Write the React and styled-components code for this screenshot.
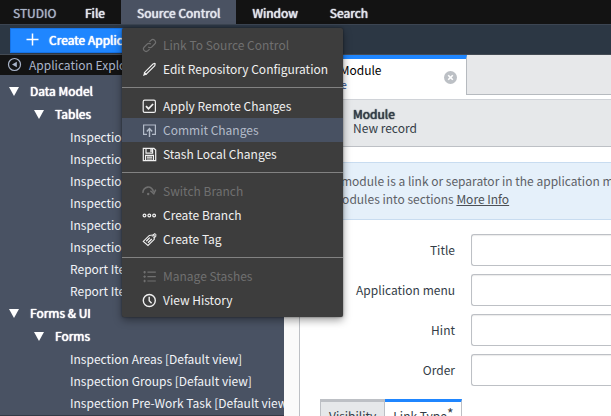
import React from "react";
import styled, { createGlobalStyle, css } from "styled-components";

const Global = createGlobalStyle`
  *, *::before, *::after { box-sizing: border-box; }
  body {
    margin: 0;
    overflow: hidden;
    background: #ffffff;
    color: #343d47;
    font-family: "Noto Sans CJK SC", "Noto Sans", sans-serif;
    font-size: 12px;
    line-height: 18px;
  }
  button, input { font: inherit; color: inherit; }
`;

const strong = css`
  font-weight: 400;
  text-shadow: 0 0 1px currentColor, 0 0 1px currentColor;
`;

const Page = styled.div`
  display: flex;
  flex-direction: column;
  height: 100vh;
  overflow: hidden;
`;

const MenuBar = styled.nav`
  display: flex;
  flex: none;
  height: 24px;
  background: #131313;
`;

const Brand = styled.span`
  width: 69px;
  padding-left: 13px;
  line-height: 25px;
  font-weight: 400;
  text-shadow: 0 0 1px currentColor;
  color: #a9b4c9;
`;

const MenuEntry = styled.div`
  position: relative;
`;

const MenuButton = styled.button`
  display: block;
  height: 24px;
  padding: 1px 16px 0;
  border: 0;
  white-space: nowrap;
  ${strong}
  color: #e2e6ed;
  background: ${(p) => (p.$open ? "#4a5262" : "transparent")};
`;

const Dropdown = styled.div`
  position: absolute;
  z-index: 5;
  top: 28px;
  left: 1px;
  width: 221px;
  padding: 5px 0;
  border-radius: 2px;
  background: #3d3d3d;
  box-shadow: 0 3px 8px rgba(0, 0, 0, 0.4), 0 0 2px rgba(0, 0, 0, 0.5);
`;

const Divider = styled.hr`
  height: 1px;
  margin: 6px 0;
  border: 0;
  background: #828282;
`;

const DropdownItem = styled.button`
  display: flex;
  align-items: center;
  gap: 6px;
  width: 100%;
  height: 24px;
  padding: 0 20px 1px;
  border: 0;
  white-space: nowrap;
  background: ${(p) => (p.$active ? "#485162" : "transparent")};
  color: ${(p) => (p.$active ? "#b4bcc9" : "#f0f0f0")};
  &:disabled { color: #707070; }
`;

const Glyph = styled.svg`
  flex: none;
  width: 15px;
  height: 15px;
  fill: none;
  stroke: currentColor;
  stroke-width: 1.2;
`;

const MenuGlyph = styled(Glyph)`
  margin-top: 1px;
`;

const Toolbar = styled.div`
  flex: none;
  height: 31px;
  padding: 3px 10px;
  border-top: 1px solid #3c4552;
  border-bottom: 1px solid #444b54;
  background: #2c3744;
`;

const CreateButton = styled.button`
  display: flex;
  align-items: center;
  gap: 9px;
  height: 25px;
  width: 178px;
  padding: 0 14px 2px;
  border: 1px solid #1673e6;
  background: #1f86ff;
  color: #ffffff;
  ${strong}
  white-space: nowrap;
`;

const Columns = styled.div`
  display: flex;
  flex: 1;
  min-height: 0;
`;

const Sidebar = styled.aside`
  flex: none;
  width: 284px;
  overflow: hidden;
  background: #495263;
  color: #f2f4f8;
  border-bottom: 1px solid #333a47;
`;

const SidebarHeader = styled.div`
  display: flex;
  align-items: center;
  gap: 7px;
  height: 20px;
  padding: 0 0 1px 7px;
  background: #131313;
  color: #a9b4c9;
`;

const Tree = styled.ul`
  margin: 0;
  padding: ${(p) => (p.$root ? "5px 0 0" : "0")};
  list-style: none;
`;

const Branch = styled.button`
  display: flex;
  align-items: center;
  gap: 11px;
  width: 100%;
  height: 23px;
  padding: 0 0 1px ${(p) => (p.$depth ? "34px" : "9px")};
  border: 0;
  background: none;
  ${strong}
  color: #ffffff;
`;

const Caret = styled.svg`
  width: 10px;
  height: 9px;
  margin-top: 1px;
  fill: #ffffff;
`;

const Leaf = styled.a`
  display: block;
  height: 22px;
  padding-left: 70px;
  line-height: 21px;
  white-space: nowrap;
  color: inherit;
  text-decoration: none;
`;

const Main = styled.main`
  display: flex;
  flex: 1;
  flex-direction: column;
  min-width: 0;
  padding-left: 15px;
  background: #fafafa;
`;

const TabStrip = styled.div`
  display: flex;
  flex: none;
  height: 40px;
  background: #ffffff;
`;

const EditorTab = styled.div`
  display: flex;
  align-items: center;
  justify-content: space-between;
  width: 168px;
  padding: 0 8px 0 13px;
  border-top: 4px solid #1f86ff;
  border-right: 1px solid #b6babf;
`;

const TabTitle = styled.div`
  line-height: 15px;
  color: #000000;
`;

const TabKind = styled.small`
  display: block;
  font-size: 10px;
  line-height: 15px;
  color: #1f4b8f;
`;

const CloseButton = styled.button`
  display: flex;
  padding: 0;
  border: 0;
  background: none;
  color: #bcc0c5;
`;

const TabFill = styled.div`
  flex: 1;
  border-bottom: 1px solid #b6babf;
  background: #e7e8ea;
`;

const Document = styled.div`
  flex: 1;
  min-height: 0;
  overflow: hidden;
  border-left: 1px solid #bdc0c5;
  padding-top: 4px;
  background: #ffffff;
`;

const RecordHeader = styled.header`
  height: 48px;
  padding: 7px 0 0 53px;
  border-top: 1px solid #d0d3d8;
  border-bottom: 1px solid #bdc0c5;
  background: #e6e8ea;
  line-height: 14px;
`;

const RecordTitle = styled.h1`
  margin: 0;
  font-size: 12px;
  line-height: 14px;
  ${strong}
`;

const Form = styled.form`
  padding: 15px 0 0 20px;
`;

const Notice = styled.p`
  height: 58px;
  margin: 0 0 14px;
  padding: 9px 0 0 10px;
  overflow: hidden;
  white-space: nowrap;
  border: solid #c8dcf0;
  border-width: 1px 0 1px 1px;
  background: #e5f0fa;
  color: #5d6167;
`;

const InfoLink = styled.a`
  color: #4c5056;
`;

const Field = styled.div`
  display: grid;
  grid-template-columns: 135px 1fr;
  column-gap: 16px;
  align-items: center;
  margin-bottom: 8px;
`;

const Label = styled.label`
  padding-bottom: 1px;
  text-align: right;
`;

const TextInput = styled.input`
  width: 100%;
  min-width: 0;
  height: 32px;
  padding: 0 8px;
  border: solid #bdc0c5;
  border-width: 1px 0 1px 1px;
  border-radius: 3px 0 0 3px;
  background: #ffffff;
  box-shadow: inset 0 1px 1px rgba(0, 0, 0, 0.08);
`;

const SectionTabs = styled.div`
  display: flex;
  margin-top: 13px;
`;

const SectionTab = styled.button`
  height: 34px;
  padding: 0 8px 2px;
  border: 1px solid #bdc0c5;
  border-top: 3px solid #bdc0c5;
  background: #e6e8ea;
  ${(p) =>
    p.$active &&
    css`
      border-top-color: #1f86ff;
      border-left: 0;
      background: #ffffff;
    `}
`;

const Required = styled.sup`
  line-height: 0;
  font-size: 14px;
  vertical-align: 2px;
`;

const icons = {
  link: (
    <>
      <path d="M6.2 8.8a2.6 2.6 0 0 0 3.7 0l2.8-2.8a2.6 2.6 0 0 0-3.7-3.7L7.4 3.9" />
      <path d="M8.8 6.2a2.6 2.6 0 0 0-3.7 0L2.3 9a2.6 2.6 0 0 0 3.7 3.7l1.6-1.6" />
    </>
  ),
  pencil: (
    <>
      <path d="M2.4 10.6L11 2l1.6-.6.6.4-.4 1.8-8.6 8.6z" strokeWidth="1.1" />
      <path d="M1 14l1.2-3.8 2.6 2.4z" fill="currentColor" stroke="none" />
    </>
  ),
  check: (
    <>
      <rect x="1.2" y="1.2" width="12.2" height="12.2" rx="1.5" />
      <path d="M4 7.2l2.5 2.6 4.6-4.8" strokeWidth="1.8" />
    </>
  ),
  upload: (
    <>
      <path d="M5 11.4H1.6V2h11.8v9.4H10" />
      <path d="M7.5 14V5.8M4.8 8.4l2.7-2.8 2.7 2.8" strokeWidth="1.4" />
    </>
  ),
  save: (
    <>
      <path d="M1.3 1.3h10.6l1.8 1.8v10.6H1.3z" />
      <path d="M4 1.5v4.7h6.6V1.5M3.6 13.5V8.4h7.8v5.1M5 10.2h5M5 12h5" />
      <path d="M8.3 2h1.5v3H8.3z" fill="currentColor" stroke="none" />
    </>
  ),
  swap: (
    <>
      <path d="M1 8.8a5.2 5.2 0 0 1 10.4-1" strokeWidth="1.6" />
      <path d="M8.4 6.8l3.4 3 1.9-4.2" strokeWidth="1.4" />
      <circle cx="6.2" cy="10" r="1.2" fill="currentColor" stroke="none" />
    </>
  ),
  dots: (
    <>
      <circle cx="2.5" cy="7.5" r="1.4" />
      <circle cx="7.3" cy="7.5" r="1.4" />
      <circle cx="12.1" cy="7.5" r="1.4" />
    </>
  ),
  tag: (
    <>
      <path d="M1.3 9.4l6-6 4.8-.6.2 4.5-6.3 6.2z" strokeWidth="1.1" />
      <path d="M4.2 9.2l3.6-3.6M6 10.8l3.8-3.8" strokeWidth="1.3" />
      <path d="M10.2 4.6l2-3 1.8.8-.4 2.6-2.2.8" strokeWidth="1" />
    </>
  ),
  list: (
    <path d="M1.4 3.2h2.4M1.4 7.6h2.4M1.4 12h2.4M5.4 3.2h8.4M5.4 7.6h8.4M5.4 12h8.4M2.6 2v2.4M2.6 6.4v2.4M2.6 10.8v2.4" />
  ),
  clock: (
    <>
      <circle cx="7.3" cy="7.5" r="6" strokeWidth="1.4" />
      <path d="M7.2 3.8v4l2.4 2.4" strokeWidth="1.4" />
    </>
  ),
};

const menuGroups = [
  [
    { icon: "link", text: "Link To Source Control", disabled: true },
    { icon: "pencil", text: "Edit Repository Configuration" },
  ],
  [
    { icon: "check", text: "Apply Remote Changes" },
    { icon: "upload", text: "Commit Changes", active: true },
    { icon: "save", text: "Stash Local Changes" },
  ],
  [
    { icon: "swap", text: "Switch Branch", disabled: true },
    { icon: "dots", text: "Create Branch" },
    { icon: "tag", text: "Create Tag" },
  ],
  [
    { icon: "list", text: "Manage Stashes", disabled: true },
    { icon: "clock", text: "View History" },
  ],
];

const tree = [
  {
    name: "Data Model",
    child: "Tables",
    items: [
      "Inspection",
      "Inspection",
      "Inspection",
      "Inspection",
      "Inspection",
      "Inspection",
      "Report Item",
      "Report Item",
    ],
  },
  {
    name: "Forms & UI",
    child: "Forms",
    items: [
      "Inspection Areas [Default view]",
      "Inspection Groups [Default view]",
      "Inspection Pre-Work Task [Default view]",
    ],
  },
];

const fields = [
  ["title", "Title"],
  ["menu", "Application menu"],
  ["hint", "Hint"],
  ["order", "Order"],
];

function TreeBranch({ depth, name }) {
  return (
    <Branch type="button" aria-expanded="true" $depth={depth}>
      <Caret viewBox="0 0 10 9" aria-hidden="true">
        <path d="M0 0h10L5 9z" />
      </Caret>
      {name}
    </Branch>
  );
}

function SourceControlMenu() {
  return (
    <Dropdown role="menu">
      {menuGroups.map((group, i) => (
        <React.Fragment key={i}>
          {i > 0 && <Divider />}
          {group.map((item) => (
            <DropdownItem
              key={item.text}
              type="button"
              role="menuitem"
              disabled={item.disabled}
              $active={item.active}
            >
              <MenuGlyph viewBox="0 0 15 15" aria-hidden="true">
                {icons[item.icon]}
              </MenuGlyph>
              {item.text}
            </DropdownItem>
          ))}
        </React.Fragment>
      ))}
    </Dropdown>
  );
}

export default function App() {
  return (
    <Page>
      <Global />
      <MenuBar>
        <Brand>STUDIO</Brand>
        <MenuEntry>
          <MenuButton type="button">File</MenuButton>
        </MenuEntry>
        <MenuEntry>
          <MenuButton type="button" aria-expanded="true" $open>
            Source Control
          </MenuButton>
          <SourceControlMenu />
        </MenuEntry>
        <MenuEntry>
          <MenuButton type="button">Window</MenuButton>
        </MenuEntry>
        <MenuEntry>
          <MenuButton type="button">Search</MenuButton>
        </MenuEntry>
      </MenuBar>

      <Toolbar>
        <CreateButton type="button">
          <Glyph viewBox="0 0 15 15" aria-hidden="true">
            <path d="M7.5 1.5v12M1.5 7.5h12" strokeWidth="1.5" />
          </Glyph>
          Create Application File
        </CreateButton>
      </Toolbar>

      <Columns>
        <Sidebar>
          <SidebarHeader>
            <Glyph viewBox="0 0 15 15" aria-hidden="true">
              <circle cx="7.5" cy="7.5" r="6" />
              <path d="M9.8 4.8v5.4L5 7.5z" fill="currentColor" stroke="none" />
            </Glyph>
            Application Explorer
          </SidebarHeader>
          <Tree $root>
            {tree.map((section) => (
              <li key={section.name}>
                <TreeBranch name={section.name} />
                <Tree>
                  <li>
                    <TreeBranch depth={1} name={section.child} />
                    <Tree>
                      {section.items.map((item, i) => (
                        <li key={i}>
                          <Leaf href="#">{item}</Leaf>
                        </li>
                      ))}
                    </Tree>
                  </li>
                </Tree>
              </li>
            ))}
          </Tree>
        </Sidebar>

        <Main>
          <TabStrip>
            <EditorTab>
              <TabTitle>
                New Module
                <TabKind>Module</TabKind>
              </TabTitle>
              <CloseButton type="button" aria-label="Close tab">
                <Glyph viewBox="0 0 15 15" aria-hidden="true">
                  <circle cx="7.5" cy="7.5" r="6.5" fill="currentColor" stroke="none" />
                  <path d="M5.2 5.2l4.6 4.6M9.8 5.2L5.2 9.8" stroke="#ffffff" strokeWidth="1.6" />
                </Glyph>
              </CloseButton>
            </EditorTab>
            <TabFill />
          </TabStrip>
          <Document>
            <RecordHeader>
              <RecordTitle>Module</RecordTitle>
              New record
            </RecordHeader>
            <Form>
              <Notice>
                A module is a link or separator in the application menu. Group
                <br />
                modules into sections <InfoLink href="#">More Info</InfoLink>
              </Notice>
              {fields.map(([id, label]) => (
                <Field key={id}>
                  <Label htmlFor={id}>{label}</Label>
                  <TextInput id={id} type="text" />
                </Field>
              ))}
              <SectionTabs>
                <SectionTab type="button">Visibility</SectionTab>
                <SectionTab type="button" $active>
                  Link Type<Required>*</Required>
                </SectionTab>
              </SectionTabs>
            </Form>
          </Document>
        </Main>
      </Columns>
    </Page>
  );
}
